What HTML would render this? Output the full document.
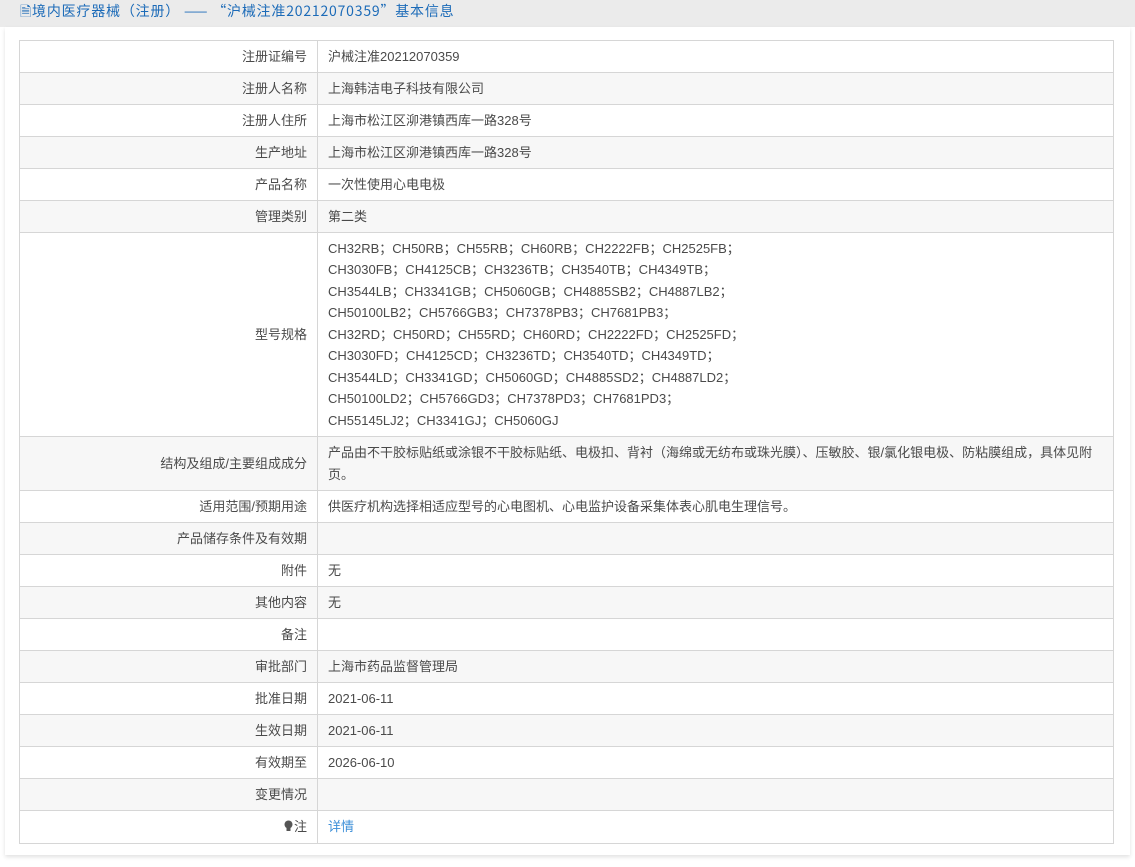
<!DOCTYPE html>
<html><head><meta charset="utf-8"><style>
html,body{margin:0;padding:0;background:#fff;width:1135px;height:867px;overflow:hidden;font-family:"Liberation Sans","Noto Sans CJK SC",sans-serif;}
.hd{position:absolute;left:0;top:0;width:1135px;height:27px;background:#ebebeb;}
.hd span{position:absolute;left:20px;top:2px;font-size:14px;color:#1c6bb8;line-height:19px;font-family:"Noto Sans CJK SC",sans-serif;letter-spacing:0.8px;white-space:nowrap;}
.panel{position:absolute;left:5px;top:27px;width:1125px;height:828px;background:#fff;box-shadow:0 2px 4px rgba(0,0,0,.12);}
table{position:absolute;left:19px;top:40px;width:1095px;border-collapse:collapse;font-size:13px;color:#4a4a4a;}
td{border:1px solid #d6d6d6;height:31px;padding:0 10px;line-height:21.5px;}
td.l{width:277px;text-align:right;}
tr:nth-child(even) td{background:#f7f7f7;}
.m{font-family:"Noto Sans CJK SC",sans-serif;letter-spacing:0.1px;}
a{color:#3d8fd8;text-decoration:none;}
</style></head><body>
<div class="hd"><span>🗎境内医疗器械（注册） —— “沪械注准20212070359”基本信息</span></div>
<div class="panel"></div>
<table>
<tr><td class="l">注册证编号</td><td>沪械注准20212070359</td></tr>
<tr><td class="l">注册人名称</td><td>上海韩洁电子科技有限公司</td></tr>
<tr><td class="l">注册人住所</td><td>上海市松江区泖港镇西库一路328号</td></tr>
<tr><td class="l">生产地址</td><td>上海市松江区泖港镇西库一路328号</td></tr>
<tr><td class="l">产品名称</td><td>一次性使用心电电极</td></tr>
<tr><td class="l">管理类别</td><td>第二类</td></tr>
<tr><td class="l" style="height:203px">型号规格</td><td style="padding-top:4px;padding-bottom:4px">CH32RB；CH50RB；CH55RB；CH60RB；CH2222FB；CH2525FB；<br>CH3030FB；CH4125CB；CH3236TB；CH3540TB；CH4349TB；<br>CH3544LB；CH3341GB；CH5060GB；CH4885SB2；CH4887LB2；<br>CH50100LB2；CH5766GB3；CH7378PB3；CH7681PB3；<br>CH32RD；CH50RD；CH55RD；CH60RD；CH2222FD；CH2525FD；<br>CH3030FD；CH4125CD；CH3236TD；CH3540TD；CH4349TD；<br>CH3544LD；CH3341GD；CH5060GD；CH4885SD2；CH4887LD2；<br>CH50100LD2；CH5766GD3；CH7378PD3；CH7681PD3；<br>CH55145LJ2；CH3341GJ；CH5060GJ</td></tr>
<tr><td class="l" style="height:53px">结构及组成/主要组成成分</td><td>产品由不干胶标贴纸或涂银不干胶标贴纸、电极扣、背衬（海绵或无纺布或珠光膜）、压敏胶、银/氯化银电极、防粘膜组成，具体见附页。</td></tr>
<tr><td class="l">适用范围/预期用途</td><td>供医疗机构选择相适应型号的心电图机、心电监护设备采集体表心肌电生理信号。</td></tr>
<tr><td class="l">产品储存条件及有效期</td><td></td></tr>
<tr><td class="l">附件</td><td>无</td></tr>
<tr><td class="l">其他内容</td><td>无</td></tr>
<tr><td class="l">备注</td><td></td></tr>
<tr><td class="l">审批部门</td><td>上海市药品监督管理局</td></tr>
<tr><td class="l">批准日期</td><td>2021-06-11</td></tr>
<tr><td class="l">生效日期</td><td>2021-06-11</td></tr>
<tr><td class="l">有效期至</td><td>2026-06-10</td></tr>
<tr><td class="l">变更情况</td><td></td></tr>
<tr><td class="l" style="height:32px"><svg width="9" height="12" viewBox="0 0 9 12" style="vertical-align:-1px;margin-right:1px"><circle cx="4.5" cy="4.5" r="4" fill="#555"/><rect x="2.5" y="8" width="4" height="3" fill="#555"/></svg>注</td><td><a>详情</a></td></tr>
</table>
</body></html>
